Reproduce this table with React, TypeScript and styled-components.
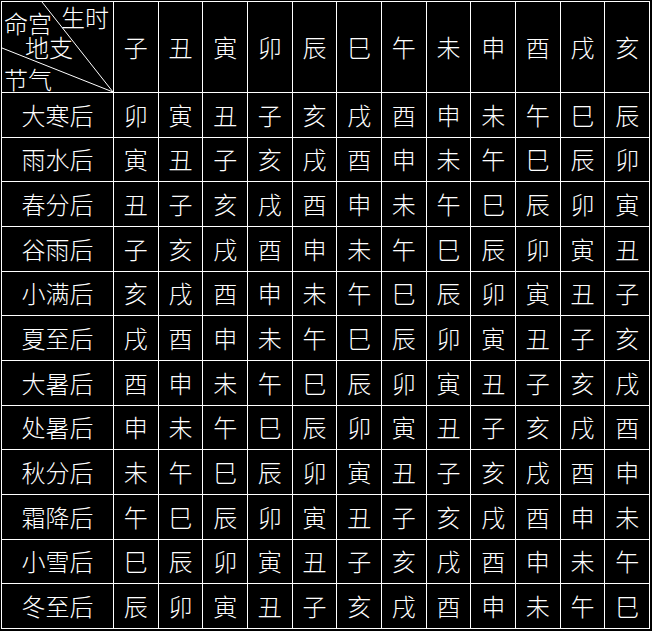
import React from "react";
import styled, { createGlobalStyle } from "styled-components";

const Global = createGlobalStyle`
  html, body { margin: 0; padding: 0; background: #000; }
  body { font-family: "Noto Sans CJK SC", "Noto Sans", sans-serif; }
`;

const Table = styled.div`
  margin: 1px 0 0 1px;
  width: 649px;
  height: 628px;
  box-sizing: border-box;
  padding: 1px;
  display: grid;
  grid-template-columns: 111px repeat(12, 1fr);
  grid-template-rows: 90px repeat(12, 1fr);
  gap: 1px;
  background: #fff;
`;

const Cell = styled.div`
  background: #000;
  color: #fff;
  font-size: 24px;
  line-height: 1;
  font-weight: 300;
  display: flex;
  align-items: center;
  justify-content: center;
`;

const CornerCell = styled.div`
  background: #000;
  color: #fff;
  position: relative;
  overflow: hidden;
  display: flex;
  flex-direction: column;
  padding: 3px 4px 0 2px;
  font-size: 24px;
  line-height: 1;
  font-weight: 300;
`;

const Diagonals = styled.svg`
  position: absolute;
  left: 0;
  top: 0;
  width: 111px;
  height: 90px;
`;

const CornerRow = styled.div<{ $indent?: number; $gapTop?: number }>`
  position: relative;
  display: flex;
  justify-content: space-between;
  align-items: flex-start;
  padding-left: ${(p) => p.$indent ?? 0}px;
  margin-top: ${(p) => p.$gapTop ?? 0}px;
  white-space: nowrap;
`;

const Label = styled.span<{ $drop?: number }>`
  margin-top: ${(p) => p.$drop ?? 0}px;
`;

const BRANCHES = ["子", "丑", "寅", "卯", "辰", "巳", "午", "未", "申", "酉", "戌", "亥"];
const TERMS = ["大寒后", "雨水后", "春分后", "谷雨后", "小满后", "夏至后", "大暑后", "处暑后", "秋分后", "霜降后", "小雪后", "冬至后"];

export default function App() {
  return (
    <>
      <Global />
      <Table>
        <CornerCell>
          <Diagonals viewBox="0 0 111 90">
            <line x1="40" y1="0" x2="111" y2="90" stroke="#fff" strokeWidth="1" />
            <line x1="0" y1="46" x2="111" y2="90" stroke="#fff" strokeWidth="1" />
          </Diagonals>
          <CornerRow>
            <Label $drop={6}>命宫</Label>
            <Label>生时</Label>
          </CornerRow>
          <CornerRow $indent={21}>
            <Label>地支</Label>
          </CornerRow>
          <CornerRow $gapTop={8}>
            <Label>节气</Label>
          </CornerRow>
        </CornerCell>
        {BRANCHES.map((b) => (
          <Cell key={"h" + b}>{b}</Cell>
        ))}
        {TERMS.map((t, i) => (
          <React.Fragment key={t}>
            <Cell>{t}</Cell>
            {BRANCHES.map((_, j) => (
              <Cell key={j}>{BRANCHES[(((3 - i - j) % 12) + 12) % 12]}</Cell>
            ))}
          </React.Fragment>
        ))}
      </Table>
    </>
  );
}
